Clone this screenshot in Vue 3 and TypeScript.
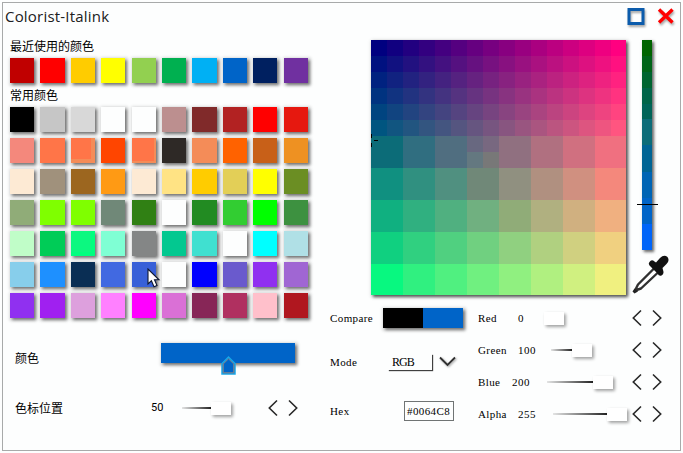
<script setup lang="ts">
interface Channel {
  name: string
  value: number
  gap: number
  lead: number
  track: number
}

const recent: string[] = [
  '#c00000', '#ff0000', '#ffcc00', '#ffff00', '#92d050',
  '#00b050', '#00b0f4', '#0064c8', '#002060', '#7030a0',
]

const common: string[] = [
  '#000000', '#c6c6c6', '#d8d8d8', '#fdfefe', '#fdfefe', '#bc8f8f', '#802a2a', '#b22222', '#ff0000', '#e6180f',
  '#f4887c', '#ff7548', '#ff7548', '#ff4500', '#ff7548', '#2e2926', '#f48c58', '#ff6200', '#c86018', '#ee9122',
  '#fdead4', '#a0917c', '#9c661f', '#ff9a14', '#fdead4', '#ffe384', '#ffcc00', '#e3cf57', '#ffff00', '#6b8e23',
  '#90ac78', '#7fff00', '#7fff00', '#708878', '#308014', '#fdfefe', '#228b22', '#32cd32', '#00ff00', '#3d9140',
  '#c0fdc8', '#00cc57', '#0cf880', '#7fffd4', '#848686', '#03c890', '#40e0d0', '#fdfefe', '#00ffff', '#b0e0e6',
  '#87ceeb', '#1e90ff', '#0a2e54', '#4169e1', '#3860d8', '#fdfefe', '#0000ff', '#6a5acd', '#9030f0', '#a066d3',
  '#9030f0', '#a020f0', '#dda0dd', '#ff80ff', '#ff00ff', '#da70d6', '#872657', '#b03060', '#ffc0cb', '#b0171f',
]

const edges: Record<number, string> = { 12: 'edge-orange', 14: 'edge-orange-thin', 42: 'edge-green' }
const hovered = 54

const fineCells: string[] = Array.from({ length: 96 }, (_, n) => {
  const col = n % 16
  const row = Math.floor(n / 16)
  return `rgb(${col * 17}, ${row * 17}, 128)`
})

const wideOverrides: Record<number, string> = {
  0: '#0c6c78', 1: '#306e80', 2: '#506e80',
  11: '#708878', 15: '#f4887c', 20: '#90ac78', 32: '#08f880',
}
const wideCells: string[] = Array.from({ length: 40 }, (_, n) => {
  const col = n % 8
  const row = Math.floor(n / 8)
  return wideOverrides[n] ?? `rgb(${16 + col * 32}, ${112 + row * 32}, 128)`
})
const splitCell = 3
const splitColors: string[] = ['#686880', '#786880', '#647880', '#787878']

const levels: { color: string; size: number }[] = [
  { color: '#006400', size: 16 }, { color: '#006418', size: 16 }, { color: '#006430', size: 16 },
  { color: '#006448', size: 16 }, { color: '#006458', size: 15 }, { color: '#0c6c78', size: 26 },
  { color: '#006494', size: 27 }, { color: '#0064b4', size: 26 }, { color: '#0064c8', size: 26 },
  { color: '#0064f8', size: 26 },
]

const channels: Channel[] = [
  { name: 'Red', value: 0, gap: 40, lead: 65, track: 0 },
  { name: 'Green', value: 100, gap: 40, lead: 72, track: 21 },
  { name: 'Blue', value: 200, gap: 34, lead: 68, track: 46 },
  { name: 'Alpha', value: 255, gap: 40, lead: 74, track: 54 },
]
</script>

<template>
  <div class="window">
    <header class="titlebar">
      <h1>Colorist-Italink</h1>
      <svg class="win-icon" width="20" height="20" viewBox="0 0 20 20">
        <rect x="4" y="2.5" width="14" height="14" fill="none" stroke="#0c5cac" stroke-width="3" />
      </svg>
      <svg class="win-icon close" width="20" height="20" viewBox="0 0 20 20">
        <path d="M4 2.5L17.5 15.5M17.5 2.5L4 15.5" stroke="#ff0000" stroke-width="3.4" fill="none" />
      </svg>
    </header>

    <main class="body">
      <section class="library">
        <h2 class="first">最近使用的颜色</h2>
        <div class="swatches">
          <span v-for="(c, i) in recent" :key="i" class="swatch" :style="{ background: c }" />
        </div>
        <h2 class="second">常用颜色</h2>
        <div class="swatches">
          <span v-for="(c, i) in common" :key="i" class="swatch" :class="edges[i]" :style="{ backgroundColor: c }">
            <svg v-if="i === hovered" class="pointer" width="14" height="22" viewBox="0 0 14 22">
              <path d="M1 1V16L4.4 12.8L7 18.8L10 17.5L7.5 11.8H12Z" fill="#fff" stroke="#101830" stroke-width="1.1" />
            </svg>
          </span>
        </div>

        <div class="row color-row">
          <span class="cn label">颜色</span>
          <div class="gradient">
            <svg class="stop" width="17" height="21" viewBox="0 0 17 21">
              <path d="M2 19V8.5L8.5 2L15 8.5V19Z" fill="#0064c8" stroke="#18a8e8" stroke-width="1.5" />
              <path d="M3.2 9V17.8H13.8V9L8.5 3.8Z" fill="none" stroke="#8c8888" stroke-width="1" />
            </svg>
          </div>
        </div>
        <div class="row stop-row">
          <span class="cn label">色标位置</span>
          <span class="cn number">50</span>
          <span class="track short" />
          <span class="thumb" />
          <svg class="steps" width="30" height="18" viewBox="0 0 30 18">
            <path d="M9 1.5L1.3 9L9 16.5M21 1.5L28.7 9L21 16.5" />
          </svg>
        </div>
      </section>

      <section class="editor">
        <div class="picker">
          <div class="palette">
            <div class="fine">
              <i v-for="(c, i) in fineCells" :key="i" :style="{ background: c }" />
            </div>
            <div class="wide">
              <i v-for="(c, i) in wideCells" :key="i" :style="{ background: c }">
                <template v-if="i === splitCell">
                  <b v-for="s in splitColors" :key="s" :style="{ background: s }" />
                </template>
              </i>
            </div>
            <svg class="crosshair" width="8" height="14" viewBox="0 0 8 14" shape-rendering="crispEdges">
              <path d="M0 0h1v4h-1zM0 9h1v4h-1zM3 6h4v1h-4z" />
            </svg>
          </div>
          <div class="side">
            <div class="levels">
              <i v-for="l in levels" :key="l.color" :style="{ background: l.color, height: l.size + 'px' }" />
              <span class="level-mark" />
            </div>
            <svg class="dropper" width="40" height="40" viewBox="0 0 40 40">
              <path d="M23 13.5L7 29.5L4 35.5L10 33.5L27 17.5" fill="#fff" stroke="#303030" stroke-width="2.4" stroke-linejoin="round" />
              <path d="M3.5 33.5L7 36.5L3.5 38.5L1.5 36.5Z" fill="#222" />
              <path d="M18.5 7Q20.5 4 23.5 6.5L25 7.5L29 3Q33 -1 36.5 2Q39 5.500 35.500 9L31.5 13L32 15Q33.500 19 30.500 20.500Q28 21.500 26.500 18.500L20 12Q16.500 9.500 18.500 7Z" fill="#111" />
            </svg>
          </div>
        </div>

        <div class="settings">
          <div class="options">
            <div class="option">
              <span class="key">Compare</span>
              <span class="compare"><i class="old" /><i class="new" /></span>
            </div>
            <div class="option mode">
              <span class="key">Mode</span>
              <span class="select">RGB</span>
              <svg class="chevron" width="18" height="12" viewBox="0 0 18 12">
                <path d="M1 1.5L8.5 9L16 1.5" fill="none" stroke="#303030" stroke-width="1.8" />
              </svg>
            </div>
            <div class="option hex">
              <span class="key">Hex</span>
              <span class="hex-field">#0064C8</span>
            </div>
          </div>
          <div class="channels">
            <div v-for="ch in channels" :key="ch.name" class="channel">
              <span class="key" :style="{ width: ch.gap + 'px' }">{{ ch.name }}</span>
              <span class="amount" :style="{ width: (ch.lead - ch.gap + 1) + 'px' }">{{ ch.value }}</span>
              <span class="track" :style="{ width: ch.track + 'px' }" />
              <span class="thumb" />
              <svg class="steps" width="30" height="18" viewBox="0 0 30 18">
                <path d="M9 1.5L1.3 9L9 16.5M21 1.5L28.7 9L21 16.5" />
              </svg>
            </div>
          </div>
        </div>
      </section>
    </main>
  </div>
</template>

<style>
body {
  background: #fdfefe;
  overflow: hidden;
}
#app {
  display: flow-root;
}
</style>

<style scoped>
.window {
  box-sizing: border-box;
  width: 679px;
  height: 449px;
  margin: 2px 0 0 2px;
  border: 1px solid #a8aaaa;
  background: #fdfefe;
  color: #000;
  font-family: "Liberation Serif", "Noto Sans CJK SC", serif;
  font-size: 11px;
  letter-spacing: 0.4px;
}
.titlebar {
  display: flex;
  align-items: center;
  height: 27px;
  padding: 0 5px 0 2px;
}
h1 {
  flex: 1;
  margin: 0;
  font: 400 15px/27px "Open Sans", "Noto Sans", sans-serif;
  letter-spacing: 0.2px;
  color: #202020;
}
.win-icon {
  margin: 0 0 0 10px;
  filter: drop-shadow(1px 2px 1px rgba(0, 0, 0, 0.35));
}
.body {
  display: flex;
}
.library {
  width: 320px;
  box-sizing: border-box;
  padding-left: 7px;
}
h2,
.cn {
  margin: 0;
  font: 400 12px/16px "Noto Sans CJK SC", sans-serif;
  letter-spacing: 0;
}
h2.first {
  padding: 8px 0 4px;
}
h2.second {
  padding: 4px 0;
}
.swatches {
  display: grid;
  grid-template-columns: repeat(10, 24.3px);
  grid-auto-rows: 25px;
  gap: 6px 6.1px;
}
.swatch {
  position: relative;
  box-sizing: border-box;
  box-shadow: 2px 2px 3px rgba(0, 0, 0, 0.5), 1px 1px 3px 2px rgba(0, 0, 0, 0.1);
}
.edge-orange {
  border: solid #f48c58;
  border-width: 0 4px 4px 0;
}
.edge-orange-thin {
  border: solid #f48c58;
  border-width: 0 2px 2px 0;
}
.edge-green {
  border: solid #00ff7f;
  border-width: 0 4px 4px 0;
}
.pointer {
  position: absolute;
  left: 15px;
  top: 6px;
}
.row {
  display: flex;
  align-items: center;
  padding-left: 5px;
}
.color-row {
  height: 30px;
  margin-top: 25px;
}
.label {
  width: 136px;
}
.color-row .label {
  width: 146px;
}
.gradient {
  position: relative;
  align-self: flex-start;
  width: 134px;
  height: 20px;
  background: #0064c8;
  box-shadow: 2px 2px 3px rgba(0, 0, 0, 0.5), 1px 1px 3px 2px rgba(0, 0, 0, 0.1);
}
.stop {
  position: absolute;
  left: 59px;
  top: 12px;
}
.stop-row {
  height: 30px;
  margin-top: 20px;
}
.number {
  width: 31px;
  font: 400 11px/16px Roboto, sans-serif;
}
.short {
  width: 29px;
}
.stop-row .steps {
  margin-left: 37px;
}
.track {
  height: 2px;
  background: linear-gradient(90deg, rgba(0, 0, 0, 0.1), #222);
}
.thumb {
  width: 20px;
  height: 13px;
  background: #fff;
  box-shadow: 2px 2px 3px rgba(0, 0, 0, 0.32), 1px 1px 3px rgba(0, 0, 0, 0.08);
}
.steps {
  fill: none;
  stroke: #282828;
  stroke-width: 1.6;
}
.editor {
  width: 357px;
}
.picker {
  display: flex;
  padding: 10px 0 0 48px;
}
.palette {
  position: relative;
  width: 255px;
  height: 255px;
  box-shadow: 2px 2px 3px rgba(0, 0, 0, 0.65), 1px 1px 4px 1px rgba(0, 0, 0, 0.12);
}
.fine {
  display: grid;
  grid-template-columns: repeat(15, 16px) 15px;
  grid-auto-rows: 16px;
}
.wide {
  display: grid;
  grid-template-columns: repeat(7, 32px) 31px;
  grid-template-rows: repeat(4, 32px) 31px;
}
.wide i {
  display: grid;
  grid-template-columns: 1fr 1fr;
}
.crosshair {
  position: absolute;
  left: 0;
  top: 94px;
}
.side {
  display: flex;
  flex-direction: column;
  align-items: flex-start;
  width: 40px;
  margin-left: 5px;
}
.levels {
  position: relative;
  width: 10px;
  margin-left: 11px;
  box-shadow: 2px 2px 3px rgba(0, 0, 0, 0.55), 1px 1px 3px 1px rgba(0, 0, 0, 0.08);
}
.levels i {
  display: block;
}
.level-mark {
  position: absolute;
  left: -5px;
  top: 164px;
  width: 21px;
  height: 1px;
  background: #000;
}
.dropper {
  margin: 5px 0 -40px;
}
.settings {
  display: flex;
  padding: 7px 0 0 7px;
}
.options {
  width: 148px;
}
.option {
  display: flex;
  align-items: center;
  height: 32px;
}
.options .key {
  width: 53px;
}
.compare {
  display: flex;
  width: 80px;
  height: 20px;
  box-shadow: 2px 2px 3px rgba(0, 0, 0, 0.5), 1px 1px 3px 2px rgba(0, 0, 0, 0.1);
}
.compare i {
  flex: 1;
}
.old {
  background: #000;
}
.new {
  background: #0064c8;
}
.mode {
  margin-top: 12px;
}
.select {
  box-sizing: border-box;
  width: 44px;
  height: 16px;
  margin-left: 5px;
  padding-left: 4px;
  font-size: 12px;
  letter-spacing: -1px;
  line-height: 16px;
  box-shadow: 1px 1px 1px rgba(0, 0, 0, 0.75);
  background: #fdfefe;
}
.chevron {
  margin-left: 7px;
  filter: drop-shadow(1px 1px 1px rgba(0, 0, 0, 0.4));
}
.hex {
  margin-top: 17px;
}
.hex-field {
  box-sizing: border-box;
  width: 50px;
  height: 20px;
  margin-left: 21px;
  padding-left: 2px;
  border: 1px solid #707474;
  line-height: 18px;
}
.channels {
  width: 190px;
}
.channel {
  display: flex;
  align-items: center;
  height: 32px;
}
.amount {
  letter-spacing: 0.5px;
}
.channel .steps {
  margin: 0 6px 0 auto;
}
</style>
